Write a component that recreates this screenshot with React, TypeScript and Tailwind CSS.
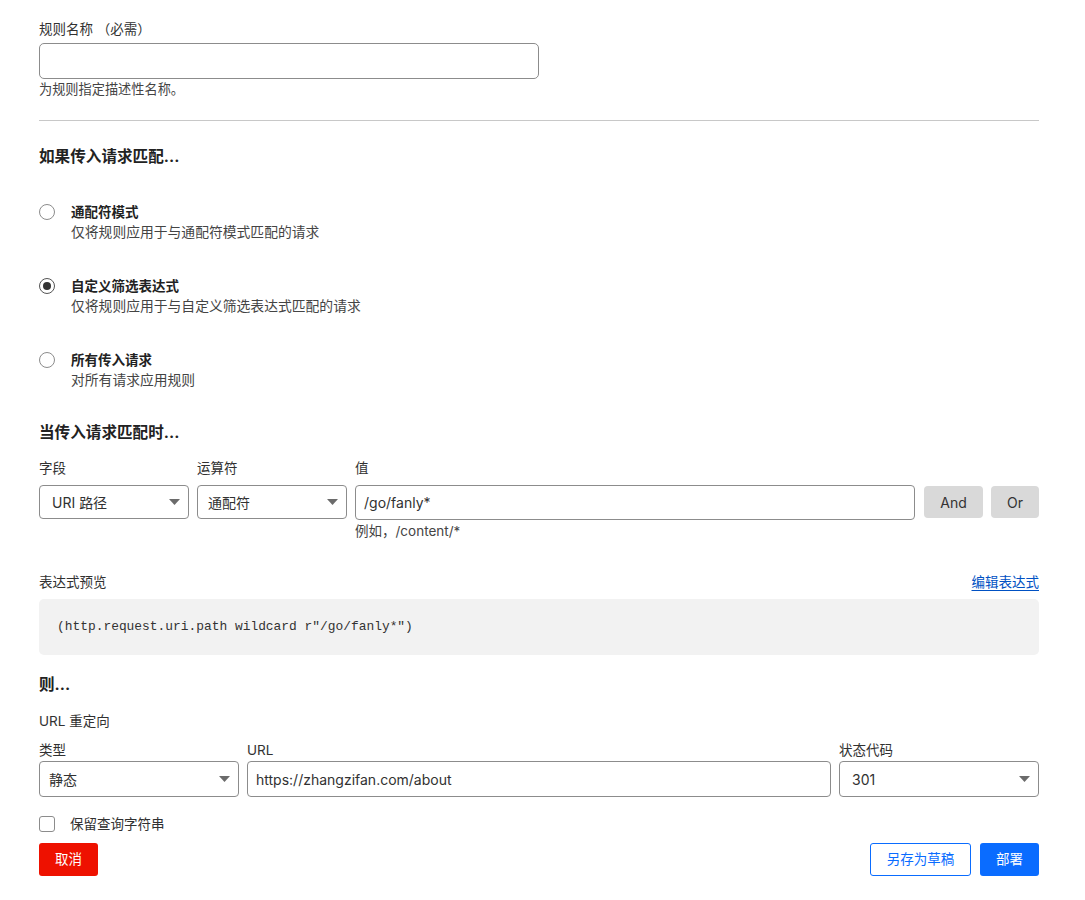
const sans = { fontFamily: 'Inter, "Noto Sans CJK SC", sans-serif' };

function Caret() {
  return (
    <svg width="11" height="6" viewBox="0 0 11 6" className="shrink-0">
      <path d="M0 0h11L5.5 6z" fill="#6b6b6b" />
    </svg>
  );
}

function Select({ value, className, pl = "pl-3" }: { value: string; className: string; pl?: string }) {
  return (
    <div
      className={`flex items-center justify-between border border-[#8c8c8c] rounded-[4px] bg-white ${pl} pr-[8px] text-[14px] text-[#313131] ${className}`}
    >
      <span>{value}</span>
      <Caret />
    </div>
  );
}

function Radio({ checked, title, desc }: { checked?: boolean; title: string; desc: string }) {
  return (
    <div className="flex">
      <div className="w-[32px] h-5 flex items-center">
        <span
          className={`w-4 h-4 rounded-full border flex items-center justify-center ${
            checked ? "border-[#555]" : "border-[#8c8c8c]"
          }`}
        >
          {checked && <span className="w-2 h-2 rounded-full bg-[#333]" />}
        </span>
      </div>
      <div>
        <div className="text-[13.5px] leading-5 font-bold text-[#222]">{title}</div>
        <div className="text-[13.8px] leading-5 text-[#444]">{desc}</div>
      </div>
    </div>
  );
}

export default function App() {
  return (
    <div className="min-h-screen bg-white text-[#313131]" style={sans}>
      <div className="ml-[39px] w-[1000px] pt-[19px] pb-6">
        <label className="block text-[13.5px] leading-5">规则名称 （必需）</label>
        <div className="mt-1 w-[500px] h-9 border border-[#8c8c8c] rounded-[5px]" />
        <p className="text-[13.2px] leading-5 text-[#444]">为规则指定描述性名称。</p>

        <hr className="mt-[21px] border-0 h-px bg-[#c8c8c8]" />

        <h2 className="mt-[25px] text-[15.6px] leading-[22px] font-bold text-[#222]">如果传入请求匹配...</h2>

        <div className="mt-[34px] flex flex-col gap-[34px]">
          <Radio title="通配符模式" desc="仅将规则应用于与通配符模式匹配的请求" />
          <Radio checked title="自定义筛选表达式" desc="仅将规则应用于与自定义筛选表达式匹配的请求" />
          <Radio title="所有传入请求" desc="对所有请求应用规则" />
        </div>

        <h2 className="mt-8 text-[15.6px] leading-[22px] font-bold text-[#222]">当传入请求匹配时...</h2>

        <div className="mt-[14px] flex gap-2 text-[13.5px] leading-5">
          <span className="w-[150px]">字段</span>
          <span className="w-[150px]">运算符</span>
          <span>值</span>
        </div>
        <div className="mt-[7px] flex gap-2 items-start">
          <Select value="URI 路径" className="w-[150px] h-[34px]" />
          <Select value="通配符" className="w-[150px] h-[34px]" pl="pl-[10px]" />
          <div className="flex-1">
            <div className="h-[35px] border border-[#8c8c8c] rounded-[4px] flex items-center pl-[8px] text-[14px]">
              /go/fanly*
            </div>
            <div className="mt-[1px] text-[13.5px] leading-5 text-[#444]">例如，/content/*</div>
          </div>
          <button className="ml-px mt-px w-[59px] h-[32px] rounded-[4px] bg-[#d9d9d9] text-[14px] text-[#333]">
            And
          </button>
          <button className="mt-px w-[48px] h-[32px] rounded-[4px] bg-[#d9d9d9] text-[14px] text-[#333]">
            Or
          </button>
        </div>

        <div className="mt-[31px] flex justify-between text-[13.5px] leading-5">
          <span>表达式预览</span>
          <a className="text-[#0051c3] underline underline-offset-[3px] decoration-[#0051c3]">编辑表达式</a>
        </div>
        <div className="mt-[7px] h-14 rounded-[5px] bg-[#f2f2f2] flex items-center px-[18px]">
          <code className="text-[12.9px] text-[#333]" style={{ fontFamily: '"Liberation Mono", monospace' }}>
            (http.request.uri.path wildcard r"/go/fanly*")
          </code>
        </div>

        <h2 className="mt-[19px] text-[15.6px] leading-[22px] font-bold text-[#222]">则...</h2>
        <div className="mt-[15px] text-[13.5px] leading-5">URL 重定向</div>

        <div className="mt-[9px] flex gap-2 text-[13.5px] leading-5">
          <span className="w-[200px]">类型</span>
          <span className="flex-1">URL</span>
          <span className="w-[200px]">状态代码</span>
        </div>
        <div className="mt-px flex gap-2">
          <Select value="静态" className="w-[200px] h-9" pl="pl-[9px]" />
          <div className="flex-1 h-9 border border-[#8c8c8c] rounded-[4px] flex items-center pl-[8px] text-[14px]">
            https://zhangzifan.com/about
          </div>
          <Select value="301" className="w-[200px] h-9" />
        </div>

        <label className="mt-[17px] flex items-center h-5 text-[13.5px]">
          <span className="w-4 h-4 rounded-[3px] border border-[#8c8c8c] mr-[15px]" />
          保留查询字符串
        </label>

        <div className="mt-[9px] flex items-center">
          <button className="w-[59px] h-[33px] rounded-[3px] bg-[#ee1100] text-white text-[13.5px]">取消</button>
          <div className="ml-auto flex gap-[9px]">
            <button className="w-[101px] h-[33px] rounded-[3px] border border-[#0a6cff] bg-white text-[#0a6cff] text-[13.5px]">
              另存为草稿
            </button>
            <button className="w-[59px] h-[33px] rounded-[3px] bg-[#0a6cff] text-white text-[13.5px]">部署</button>
          </div>
        </div>
      </div>
    </div>
  );
}
